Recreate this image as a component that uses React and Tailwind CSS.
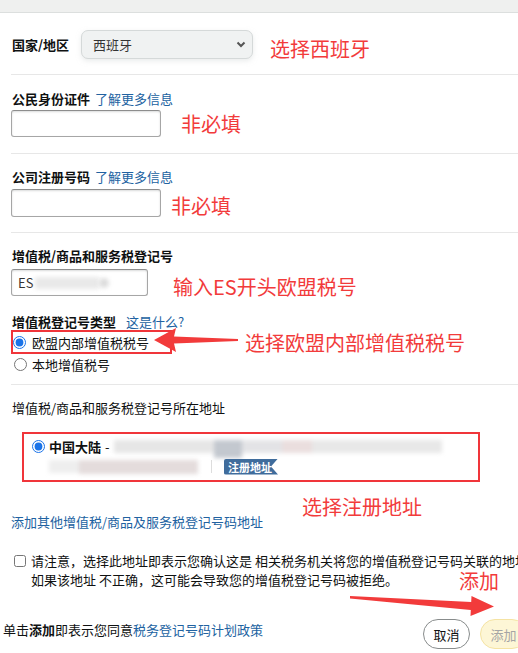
import React from 'react';

const note = 'text-[20px] leading-[20px] text-[#f23b3b] whitespace-nowrap';

const Field = ({ label, link, children }) => (
    <div className="flex items-center whitespace-nowrap">
        <span className="pl-px font-bold">{label}</span>
        {link && <a className="ml-[5px] text-[#2162a1]">{link}</a>}
        {children}
    </div>
);

const TextBox = ({ width, children }) => (
    <div className={`${width} h-[27px] flex items-center rounded-[3px] border border-[#a6a6a6] border-t-[#8d8d8d] shadow-[inset_0_1px_2px_rgba(15,17,17,0.15)]`}>
        {children}
    </div>
);

const Divider = ({ className }) => <div className={`h-px bg-[#e7e7e7] ${className}`} />;

const App = () => {
    return (
        <div className="relative w-[518px] h-[653px] overflow-hidden bg-white font-['Noto_Sans_CJK_SC','Noto_Sans',sans-serif] text-[13px] leading-[17px] text-[#0f1111]">
            <div className="h-[13px] bg-[#eff0ef] border-b border-[#dcdfde]" />

            <div className="w-[560px] pl-[11px]">
                {/* country */}
                <div className="mt-[17px] flex items-center h-[29px]">
                    <span className="w-[70px] pl-px font-bold">国家/地区</span>
                    <div className="w-[172px] h-[29px] flex items-center justify-between rounded-[7px] border border-[#d5d9d9] bg-[#f0f2f2] pl-[11px] pr-[6px] text-[#333] shadow-[0_2px_5px_rgba(213,217,217,0.5)]">
                        西班牙
                        <svg width="10" height="7" viewBox="0 0 10 7" fill="none">
                            <path d="M1.5 1.5l3.5 3.5 3.5-3.5" stroke="#555" strokeWidth="2" />
                        </svg>
                    </div>
                    <span className={`ml-[17px] mt-[9px] ${note}`}>选择西班牙</span>
                </div>
                <Divider className="mt-[15px]" />

                {/* citizen id */}
                <div className="mt-[15px]">
                    <Field label="公民身份证件" link="了解更多信息" />
                </div>
                <div className="mt-[3px] flex items-center">
                    <TextBox width="w-[150px]" />
                    <span className={`ml-[20px] ${note}`}>非必填</span>
                </div>
                <Divider className="mt-[16px]" />

                {/* company number */}
                <div className="mt-[14px]">
                    <Field label="公司注册号码" link="了解更多信息" />
                </div>
                <div className="mt-[4px] flex items-center">
                    <TextBox width="w-[150px] h-[28px]" />
                    <span className={`ml-[10px] mt-[6px] ${note}`}>非必填</span>
                </div>
                <Divider className="mt-[15px]" />

                {/* vat number */}
                <div className="mt-[14px]">
                    <Field label="增值税/商品和服务税登记号" />
                </div>
                <div className="mt-[4px] flex items-center">
                    <TextBox width="w-[137px]">
                        <span className="pl-[6px] text-[#333]">ES</span>
                        <div className="ml-[2px] w-[64px] h-[12px] bg-[#e9e9e9] blur-[2px]" />
                        <div className="w-[10px] h-[10px] rounded-full bg-[#dcdcdc] blur-[2px]" />
                    </TextBox>
                    <span className={`ml-[25px] mt-[9px] ${note}`}>输入ES开头欧盟税号</span>
                </div>

                <div className="mt-[16px]">
                    <Field label="增值税登记号类型">
                        <a className="ml-[10px] text-[#2162a1]">这是什么?</a>
                    </Field>
                </div>
                <div className="flex items-center">
                    <div className="w-[161px] h-[24px] flex items-center border-2 border-[#f0353a]">
                        <input type="radio" checked readOnly className="m-0 w-[13px] h-[13px] accent-[#1a73e8]" />
                        <span className="ml-[6px] whitespace-nowrap">欧盟内部增值税税号</span>
                    </div>
                    <span className={`ml-[73px] mt-[2px] ${note}`}>选择欧盟内部增值税税号</span>
                </div>
                <div className="mt-[2px] h-[17px] flex items-center pl-[3px]">
                    <input type="radio" readOnly className="m-0 w-[13px] h-[13px]" />
                    <span className="ml-[5px]">本地增值税号</span>
                </div>
                <Divider className="mt-[11px]" />

                {/* address */}
                <div className="mt-[14px]">
                    <span className="pl-px">增值税/商品和服务税登记号所在地址</span>
                </div>
                <div className="mt-[16px] ml-[11px] w-[458px] h-[50px] border-2 border-[#f0353a] pl-[8px] pt-[4px]">
                    <div className="h-[17px] flex items-center whitespace-nowrap">
                        <input type="radio" checked readOnly className="m-0 w-[13px] h-[13px] accent-[#1a73e8]" />
                        <span className="ml-[4px] font-bold">中国大陆</span>
                        <span className="ml-[4px]">-</span>
                        <div className="ml-[4px] flex items-center blur-[2px]">
                            <div className="w-[100px] h-[13px] bg-[#e6e6e6]" />
                            <div className="w-[28px] h-[18px] mt-[4px] bg-[#c3c8cf]" />
                            <div className="w-[40px] h-[13px] bg-[#e3e3e6]" />
                            <div className="w-[30px] h-[13px] bg-[#eadede]" />
                            <div className="w-[130px] h-[13px] bg-[#e8e8e8]" />
                        </div>
                    </div>
                    <div className="mt-[3px] h-[17px] flex items-center pl-[17px]">
                        <div className="flex items-center blur-[2px]">
                            <div className="w-[30px] h-[13px] bg-[#eeeeee]" />
                            <div className="w-[119px] h-[14px] bg-[#e4dcdc]" />
                        </div>
                        <div className="ml-[13px] w-px h-[13px] bg-[#dddddd]" />
                        <div className="ml-[12px] w-[54px] h-[16px] flex items-center pl-[4px] rounded-l-[2px] bg-[#3f6c9c] text-[11px] leading-[16px] font-bold text-white [clip-path:polygon(0_0,100%_0,87%_50%,100%_100%,0_100%)]">
                            注册地址
                        </div>
                    </div>
                </div>

                <a className="mt-[31px] block text-[#2162a1] whitespace-nowrap">添加其他增值税/商品及服务税登记号码地址</a>

                <div className="mt-[21px] flex items-start leading-[19px] whitespace-nowrap">
                    <input type="checkbox" readOnly className="m-0 mt-[4px] ml-[3px] w-[12px] h-[12px]" />
                    <p className="ml-[5px]">
                        请注意，选择此地址即表示您确认这是 相关税务机关将您的增值税登记号码关联的地址。
                        <br />
                        如果该地址 不正确，这可能会导致您的增值税登记号码被拒绝。
                    </p>
                </div>
            </div>

            {/* footer */}
            <div className="mt-[30px] w-[527px] pl-[3px] flex items-start whitespace-nowrap">
                <p className="mt-[2px]">
                    单击<b>添加</b>即表示您同意<a className="text-[#2162a1]">税务登记号码计划政策</a>
                </p>
                <div className="ml-auto flex gap-[10px]">
                    <button className="w-[47px] h-[30px] rounded-full border border-[#888c8c] bg-white text-[13px] text-[#0f1111]">取消</button>
                    <button className="w-[47px] h-[30px] rounded-full border border-[#f5e3a3] bg-[#fdf6d6] text-[13px] text-[#a5a5a5]">添加</button>
                </div>
            </div>

            {/* annotations */}
            <span className={`absolute left-[302px] top-[497px] ${note}`}>选择注册地址</span>
            <span className="absolute left-[459px] top-[572px] text-[20px] leading-[18px] text-[#f23b3b] whitespace-nowrap">添加</span>
            <svg className="absolute left-0 top-0 pointer-events-none" width="518" height="653">
                <polygon points="154,340 176,328 174,336.5 238,339 238,341 174,343.5 176,352" fill="#f23b3b" />
                <polygon points="350,596 471.2,602 471.5,596 494,606.5 470.5,616 470.8,610 350,598.5" fill="#f23b3b" />
            </svg>
        </div>
    );
};

export default App;
